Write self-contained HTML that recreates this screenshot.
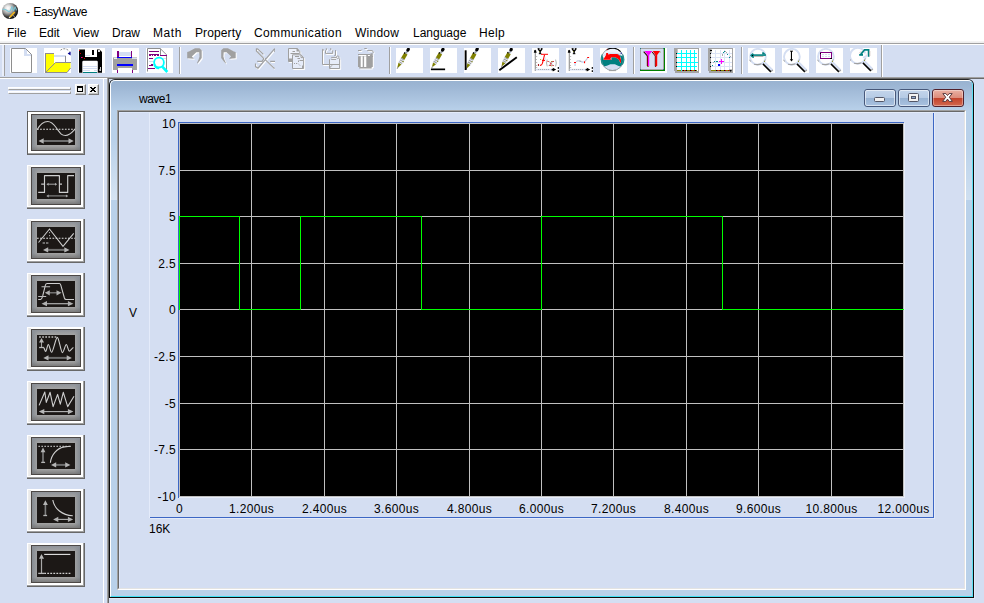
<!DOCTYPE html>
<html>
<head>
<meta charset="utf-8">
<title>EasyWave</title>
<style>
html,body{margin:0;padding:0;}
body{width:984px;height:603px;overflow:hidden;background:#d4def2;position:relative;
 font-family:"Liberation Sans",sans-serif;font-size:12px;color:#000;}
.a{position:absolute;}
.t{position:absolute;white-space:nowrap;line-height:14px;height:14px;font-size:12px;color:#000;}
.tc{text-align:center;}
.tr{text-align:right;}
svg{position:absolute;overflow:hidden;}
/* title + menu */
#top{left:0;top:0;width:984px;height:41px;background:#fff;}
.m{top:26px;}
/* toolbar */
.wb{position:absolute;top:48px;width:27px;height:25px;background:#fff;}
.sep{position:absolute;top:47px;width:1px;height:27px;background:#a0a0a0;}
.sep:after{content:"";position:absolute;left:1px;top:0;width:1px;height:27px;background:#fff;}
/* side buttons */
.pb{position:absolute;top:84px;width:11px;height:11px;box-sizing:border-box;background:#f1f1f1;border:1px solid;border-color:#fff #7c7c7c #7c7c7c #fff;box-shadow:inset -1px -1px 0 #c4c4c4;}

.sb{position:absolute;left:27px;width:58px;height:44px;box-sizing:border-box;background:#fff;
 border-style:solid;border-width:0 2px 2px 0;border-color:#686868;}
.sb:before{content:"";position:absolute;left:0;top:0;width:57px;height:43px;box-sizing:border-box;border-right:1px solid #a0a0a0;border-bottom:1px solid #a0a0a0;}
.sb:after{content:"";position:absolute;left:1px;top:1px;width:3px;height:40px;background:linear-gradient(90deg,#f0f0f0,#e4e4e4);}
.sb .in{position:absolute;left:4px;top:2px;width:50px;height:38px;box-sizing:border-box;border:1px solid #4c4846;
 background:linear-gradient(90deg,#858b92 0,#a4a4a4 6px,#a4a4a4 42px,#858b92 48px);}
.sb .in:after{content:"";position:absolute;left:0;top:0;width:48px;height:36px;background:linear-gradient(rgba(140,145,152,.9) 0,rgba(164,164,164,0) 5px,rgba(150,150,150,0) 31px,rgba(110,110,110,.75) 36px);}
.sb .bl{position:absolute;left:10px;top:8px;width:38px;height:26px;background:#1c1816;}
.sb.f{border:1px solid #606060;border-width:1px 2px 2px 1px;border-color:#606060 #686868 #686868 #606060;}
.sb.f:before{left:0;top:0;width:56px;height:42px;}
.sb.f:after{left:0;top:0;width:3px;height:40px;background:#fff;}
.sb.f .in{left:3px;top:2px;height:37px;}
.sb.f .in:after{height:35px;}
.sb.f .bl{left:9px;top:7px;}
.wbtn{top:89px;width:32px;height:18px;box-sizing:border-box;border:1px solid #47587a;border-radius:3px;
 background:linear-gradient(#c3d5eb 0%,#b6cbe5 47%,#98b3d3 50%,#a9c2e0 100%);}
.wbtn .hi{position:absolute;left:0;top:0;width:28px;height:14px;border:1px solid rgba(255,255,255,.55);border-radius:2px;}
.wbtn.cl{border-color:#51202b;background:linear-gradient(#eab1a4 0%,#dd8d7c 47%,#c2412a 50%,#d2684f 100%);}
.wbtn.cl .hi{border-color:rgba(255,255,255,.35);}
</style>
</head>
<body>
<!-- title & menu -->
<div id="top" class="a"></div>
<div class="a" style="left:0;top:41px;width:984px;height:2px;background:linear-gradient(#f6f6f6,#ececec);"></div>
<div class="a" style="left:0;top:43px;width:984px;height:1px;background:#a0a0a0;"></div>
<div class="a" style="left:0;top:44px;width:984px;height:1px;background:#fff;"></div>
<svg style="left:0;top:0" width="24" height="22" viewBox="0 0 24 22">
<defs><radialGradient id="sg" cx="0.38" cy="0.34" r="0.75" fx="0.36" fy="0.32">
<stop offset="0" stop-color="#ffffff"/><stop offset="0.2" stop-color="#e6e6e6"/><stop offset="0.46" stop-color="#9c9c9c"/><stop offset="0.68" stop-color="#444444"/><stop offset="0.9" stop-color="#080808"/><stop offset="1" stop-color="#000"/></radialGradient></defs>
<circle cx="10.1" cy="11" r="8.05" fill="url(#sg)"/>
<path d="M2.6 9.6 Q4.6 8.6 6.6 10.2 Q8.8 12.4 10.4 10.6 L11.9 6.6 L13.5 10.9 L15.1 6.9 L16.6 10.4" fill="none" stroke="#78c6d6" stroke-width="1.1" stroke-linejoin="round" opacity="0.95"/>
<path d="M14.7 12 L9.9 17.1" stroke="#f2b61c" stroke-width="1.7" fill="none"/>
<path d="M9.9 17.1 L9.1 18" stroke="#f0f0f0" stroke-width="1.3" fill="none"/>
<path d="M13 15.2 L15.6 18" stroke="#d8d8d8" stroke-width="0.9" fill="none" opacity="0.8"/>
</svg>
<div class="t" style="left:26px;top:5px;">- <span style="letter-spacing:-0.4px">EasyWave</span></div>
<div class="t m" style="left:7px;">File</div>
<div class="t m" style="left:39px;">Edit</div>
<div class="t m" style="left:73px;">View</div>
<div class="t m" style="left:112px;">Draw</div>
<div class="t m" style="left:153px;letter-spacing:0.6px">Math</div>
<div class="t m" style="left:195px;letter-spacing:0.12px">Property</div>
<div class="t m" style="left:254px;letter-spacing:0.35px">Communication</div>
<div class="t m" style="left:355px;letter-spacing:0.25px">Window</div>
<div class="t m" style="left:413px;">Language</div>
<div class="t m" style="left:479px;letter-spacing:0.3px">Help</div>

<!-- toolbar bottom lines -->
<div class="a" style="left:0;top:77px;width:984px;height:1px;background:#a0a0a0;"></div>
<div class="a" style="left:0;top:78px;width:107px;height:1px;background:#fff;"></div>
<!-- toolbar gripper -->
<div class="a" style="left:2px;top:45px;width:2px;height:31px;background:#e9eefa;"></div>
<div class="a" style="left:4px;top:45px;width:1px;height:31px;background:#a0a0a0;"></div>
<!-- toolbar end -->
<div class="a" style="left:881px;top:45px;width:1px;height:32px;background:#a0a0a0;"></div>
<div class="a" style="left:882px;top:45px;width:1px;height:32px;background:#fff;"></div>

<!--TB-START-->
<svg style="left:10px;top:48px" width="27" height="25" viewBox="10 48 27 25"><rect x="10" y="48" width="27" height="25" fill="#fff"/><g shape-rendering="crispEdges"><rect x="24" y="49" width="3" height="7" fill="#d4def2"/><rect x="24" y="54" width="8" height="2" fill="#d4def2"/></g><path d="M11.5 48.5 H25.5 L31.5 54.5 V72.5 H11.5 Z" fill="none" stroke="#8e8e8e" stroke-width="1"/></svg>
<svg style="left:44px;top:48px" width="27" height="25" viewBox="44 48 27 25"><rect x="44" y="48" width="27" height="25" fill="#fff"/><g shape-rendering="crispEdges"><rect x="45" y="53" width="9" height="20" fill="#ffff00"/><rect x="54" y="55" width="12" height="2" fill="#d4def2"/><rect x="45" y="53" width="9" height="1" fill="#8e8e8e"/><rect x="45" y="53" width="1" height="20" fill="#8e8e8e"/><rect x="65" y="56" width="1" height="7" fill="#8e8e8e"/></g><path d="M55.5 62.5 H70.5 V68 L67 72.5 H45.5 Z" fill="#ffff00"/><path d="M55.5 62.5 H71 M55.5 62.5 L45.8 72.3 M45.5 72.5 H67 L70.6 68" fill="none" stroke="#8e8e8e" stroke-width="1"/><path d="M60.5 50.2 C62.5 48.2 66.5 47.8 69.5 51.5" fill="none" stroke="#8e8e8e" stroke-width="1" stroke-dasharray="2 1.2"/><path d="M70.6 51.6 V55.4 L67.6 53.4 Z" fill="#000090"/></svg>
<svg style="left:78px;top:48px" width="27" height="25" viewBox="78 48 27 25"><rect x="78" y="48" width="27" height="25" fill="#fff"/><path d="M79 49.5 H99.5 L102 52 V72.7 H79 Z" fill="#000"/><g shape-rendering="crispEdges"><rect x="85" y="48" width="12" height="9" fill="#fff"/><rect x="85" y="55" width="5" height="1" fill="#d4def2"/><rect x="92" y="50" width="2" height="5" fill="#000"/></g><path d="M82.3 72.7 V62 Q82.3 60.8 83.5 60.8 H96.6 Q97.8 60.8 97.8 62 V72.7 Z" fill="#fff"/><g shape-rendering="crispEdges"><rect x="83" y="66" width="14" height="1" fill="#d4def2"/><rect x="83" y="68" width="14" height="1" fill="#d4def2"/><rect x="83" y="70" width="7" height="1" fill="#d4def2"/><rect x="91" y="70" width="3" height="1" fill="#fff"/><rect x="94" y="70" width="3" height="1" fill="#d4def2"/><rect x="83" y="72" width="14" height="1" fill="#008080"/><rect x="100" y="67" width="1" height="4" fill="#c8c8c8"/><rect x="99" y="69" width="1" height="2" fill="#777"/><rect x="98" y="50" width="2" height="2" fill="#ddd"/><rect x="79" y="50" width="1" height="1" fill="#d00000"/><rect x="80" y="53" width="1" height="1" fill="#d00000"/><rect x="81" y="57" width="1" height="1" fill="#c000c0"/><rect x="82" y="57" width="1" height="1" fill="#d00000"/><rect x="84" y="58" width="1" height="1" fill="#d00000"/></g></svg>
<svg style="left:112px;top:48px" width="27" height="25" viewBox="112 48 27 25"><rect x="112" y="48" width="27" height="25" fill="#fff"/><g shape-rendering="crispEdges"><rect x="119" y="52" width="12" height="4" fill="#d4def2"/><rect x="113" y="57" width="24" height="13" fill="#a0a0a0"/><rect x="118" y="68" width="14" height="2" fill="#fff"/><rect x="113" y="57" width="4" height="1" fill="#c8c8c8"/><rect x="114" y="58" width="3" height="1" fill="#f0f0f0"/><rect x="132" y="57" width="5" height="1" fill="#c8c8c8"/><rect x="132" y="58" width="5" height="1" fill="#d4def2"/><rect x="117" y="57" width="15" height="1" fill="#0000ff"/><rect x="117" y="64" width="16" height="2" fill="#0000ff"/><rect x="117" y="51" width="2" height="6" fill="#800080"/><rect x="131" y="51" width="1" height="6" fill="#800080"/><rect x="117" y="70" width="1" height="3" fill="#800080"/><rect x="132" y="70" width="1" height="3" fill="#800080"/></g></svg>
<svg style="left:146px;top:48px" width="27" height="25" viewBox="146 48 27 25"><rect x="146" y="48" width="27" height="25" fill="#fff"/><path d="M147.5 71.5 V48.5 H160.5 V55 M160.5 48.8 L166.5 54.8 V70.5" fill="none" stroke="#8e8e8e" stroke-width="1"/><g shape-rendering="crispEdges"><rect x="149" y="51" width="10" height="1" fill="#800080"/><rect x="149" y="54" width="10" height="1" fill="#800080"/><rect x="149" y="55" width="2" height="1" fill="#800080"/><rect x="152" y="55" width="1" height="1" fill="#800080"/><rect x="154" y="55" width="2" height="1" fill="#800080"/><rect x="157" y="55" width="2" height="1" fill="#800080"/><rect x="160" y="55" width="7" height="1" fill="#800080"/><rect x="149" y="58" width="4" height="1" fill="#800080"/><rect x="149" y="61" width="5" height="1" fill="#d4def2"/><rect x="149" y="65" width="4" height="1" fill="#800080"/><rect x="151" y="64" width="2" height="1" fill="#800080"/><rect x="148" y="68" width="7" height="1" fill="#800080"/><rect x="161" y="58" width="5" height="1" fill="#d4def2"/></g><circle cx="159" cy="62.6" r="4.9" fill="#fff" stroke="#00ffff" stroke-width="1.8"/><path d="M154.3 64 Q155 68.3 159 68.3 " fill="none" stroke="#00ffff" stroke-width="2"/><path d="M162.5 66.8 L167.3 72" fill="none" stroke="#00ffff" stroke-width="2.6"/></svg>
<svg style="left:180px;top:48px" width="27" height="25" viewBox="180 48 27 25"><g transform="translate(1,1)"><path d="M187.2 52 L189 51.5 L195 48.2 H199.5 L201.7 50.2 V58 L199.5 61 L197.3 63.6 L197 63 L198.6 59.5 L199.5 56.5 L199.2 52.3 H196.3 L191.8 56.6 L194 58.8 L187.2 58.3 Z" fill="#ffffff"/></g><path d="M187.2 52 L189 51.5 L195 48.2 H199.5 L201.7 50.2 V58 L199.5 61 L197.3 63.6 L197 63 L198.6 59.5 L199.5 56.5 L199.2 52.3 H196.3 L191.8 56.6 L194 58.8 L187.2 58.3 Z" fill="#a0a0a0"/></svg>
<svg style="left:214px;top:48px" width="27" height="25" viewBox="214 48 27 25"><g transform="translate(1,1)"><g transform="translate(422.9,0) scale(-1,1)"><path d="M187.2 52 L189 51.5 L195 48.2 H199.5 L201.7 50.2 V58 L199.5 61 L197.3 63.6 L197 63 L198.6 59.5 L199.5 56.5 L199.2 52.3 H196.3 L191.8 56.6 L194 58.8 L187.2 58.3 Z" fill="#fff"/></g></g><g transform="translate(422.9,0) scale(-1,1)"><path d="M187.2 52 L189 51.5 L195 48.2 H199.5 L201.7 50.2 V58 L199.5 61 L197.3 63.6 L197 63 L198.6 59.5 L199.5 56.5 L199.2 52.3 H196.3 L191.8 56.6 L194 58.8 L187.2 58.3 Z" fill="#a0a0a0"/></g></svg>
<svg style="left:248px;top:48px" width="27" height="25" viewBox="248 48 27 25"><g transform="translate(1,1)"><path d="M256.4 48.6 V51 L263.2 57.8 Q264.2 59 262.6 60.4 L262 61.3 H257.2 M256.4 48.6 L258 49.2 L263.4 54.4 M274.7 48.5 L258 68.2 L255.5 66.6 V63.4 M274.8 48.6 V52 M266 58 Q264.8 59.5 266.2 60.6 L274.2 68.3 M270.2 61.3 H275 " fill="none" stroke="#ffffff" stroke-width="1.15"/><path d="M275 61.3 Q277.3 63 276.9 65.5 Q276.5 67.8 274.2 68.3" fill="none" stroke="#ffffff" stroke-width="1" stroke-dasharray="1.6 1"/></g><path d="M256.4 48.6 V51 L263.2 57.8 Q264.2 59 262.6 60.4 L262 61.3 H257.2 M256.4 48.6 L258 49.2 L263.4 54.4 M274.7 48.5 L258 68.2 L255.5 66.6 V63.4 M274.8 48.6 V52 M266 58 Q264.8 59.5 266.2 60.6 L274.2 68.3 M270.2 61.3 H275 " fill="none" stroke="#a0a0a0" stroke-width="1.15"/><path d="M275 61.3 Q277.3 63 276.9 65.5 Q276.5 67.8 274.2 68.3" fill="none" stroke="#a0a0a0" stroke-width="1" stroke-dasharray="1.6 1"/></svg>
<svg style="left:282px;top:48px" width="27" height="25" viewBox="282 48 27 25"><g transform="translate(1,1)"><path d="M292 61.5 H288.5 V48.5 H297.4 L299.8 51.6 V54" fill="none" stroke="#ffffff" stroke-width="1"/><path d="M288.5 58.4 H292 V61.6 H288.5 Z M296.5 48.5 H297.5 L299.8 51.6 H296.5 Z" fill="#ffffff"/><path d="M290.5 53.5 H299 M292.5 51.5 H295" fill="none" stroke="#ffffff" stroke-width="1"/><path d="M292.5 54.8 H301 L303.6 57.6 V68.5 H292.5 Z" fill="none" stroke="#ffffff" stroke-width="1"/><path d="M295 56.5 H299 M297.5 58.5 H300 M299.5 60.5 H303 M298.5 60.5 V62 M301 54.8 V57.6 H303.6" fill="none" stroke="#ffffff" stroke-width="1"/><path d="M294 63.5 H298" fill="none" stroke="#ffffff" stroke-width="1" stroke-dasharray="1 1"/><path d="M298 63.5 L300.5 66" fill="none" stroke="#ffffff" stroke-width="1" stroke-dasharray="1 0.6"/><path d="M302 65.5 H303.6 V68.5 H302 Z" fill="#ffffff"/></g><path d="M289 49 H297 L299.5 52 V55 H293 V61 H289 Z" fill="#eef2fb"/><path d="M293 55.3 H301 L303.3 57.8 V68 H293 Z" fill="#e6ecf9"/><path d="M292 61.5 H288.5 V48.5 H297.4 L299.8 51.6 V54" fill="none" stroke="#a0a0a0" stroke-width="1"/><path d="M288.5 58.4 H292 V61.6 H288.5 Z M296.5 48.5 H297.5 L299.8 51.6 H296.5 Z" fill="#a0a0a0"/><path d="M290.5 53.5 H299 M292.5 51.5 H295" fill="none" stroke="#a0a0a0" stroke-width="1"/><path d="M292.5 54.8 H301 L303.6 57.6 V68.5 H292.5 Z" fill="none" stroke="#a0a0a0" stroke-width="1"/><path d="M295 56.5 H299 M297.5 58.5 H300 M299.5 60.5 H303 M298.5 60.5 V62 M301 54.8 V57.6 H303.6" fill="none" stroke="#a0a0a0" stroke-width="1"/><path d="M294 63.5 H298" fill="none" stroke="#a0a0a0" stroke-width="1" stroke-dasharray="1 1"/><path d="M298 63.5 L300.5 66" fill="none" stroke="#a0a0a0" stroke-width="1" stroke-dasharray="1 0.6"/><path d="M302 65.5 H303.6 V68.5 H302 Z" fill="#a0a0a0"/></svg>
<svg style="left:316px;top:48px" width="27" height="25" viewBox="316 48 27 25"><g transform="translate(1,1)"><path d="M322.5 49.3 V64.5 H329.4 M335.5 50.1 V55.5 H334.3" fill="none" stroke="#ffffff" stroke-width="1"/><path d="M325.5 50.4 V53.4 H332.7 V50.4 M325.5 50.4 L326.8 49 L326 48.2 M330 50.4 L331.2 49 L330.4 48.2 M322.5 49.3 L324 50.3" fill="none" stroke="#ffffff" stroke-width="1"/><path d="M329.5 59.3 V68.5 H339.6 V58.4 M329.5 64.5 H339.6 M331.2 57.4 H336 M331.2 59.4 H336 M329.5 68 L332 65.3" fill="none" stroke="#ffffff" stroke-width="1"/><circle cx="337.7" cy="57.2" r="1.3" fill="none" stroke="#ffffff" stroke-width="0.9"/></g><path d="M330 60 H339 V68 H330 Z" fill="#e6ecf9"/><path d="M322.5 49.3 V64.5 H329.4 M335.5 50.1 V55.5 H334.3" fill="none" stroke="#a0a0a0" stroke-width="1"/><path d="M325.5 50.4 V53.4 H332.7 V50.4 M325.5 50.4 L326.8 49 L326 48.2 M330 50.4 L331.2 49 L330.4 48.2 M322.5 49.3 L324 50.3" fill="none" stroke="#a0a0a0" stroke-width="1"/><path d="M329.5 59.3 V68.5 H339.6 V58.4 M329.5 64.5 H339.6 M331.2 57.4 H336 M331.2 59.4 H336 M329.5 68 L332 65.3" fill="none" stroke="#a0a0a0" stroke-width="1"/><circle cx="337.7" cy="57.2" r="1.3" fill="none" stroke="#a0a0a0" stroke-width="0.9"/></svg>
<svg style="left:350px;top:48px" width="27" height="25" viewBox="350 48 27 25"><g transform="translate(1,1)"><path d="M358 54.5 H370.4 M358 50.5 H361 L361.8 49.6 M364.3 48.5 H366.8 M367.2 50.6 H372 Q373.4 50.8 373.2 53" fill="none" stroke="#ffffff" stroke-width="1"/><path d="M358 56.2 H372.8 V53.3 H370.5 V54.5 H366.3 V56.2 M358 56.2 V66.9 H359.2 V68.5 H371.7 V66.9 H372.8 V56 Z" fill="#ffffff"/></g><path d="M358 54.5 H370.4 M358 50.5 H361 L361.8 49.6 M364.3 48.5 H366.8 M367.2 50.6 H372 Q373.4 50.8 373.2 53" fill="none" stroke="#a0a0a0" stroke-width="1"/><path d="M358 56.2 H372.8 V53.3 H370.5 V54.5 H366.3 V56.2 M358 56.2 V66.9 H359.2 V68.5 H371.7 V66.9 H372.8 V56 Z" fill="#a0a0a0"/><path d="M360.7 56.2 H362.7 V66.9 H360.7 Z M364.1 56.2 H366.3 V66.9 H364.1 Z" fill="#fff"/><rect x="367.9" y="55" width="2" height="1" fill="#fff"/></svg>
<svg style="left:396px;top:48px" width="27" height="25" viewBox="396 48 27 25"><rect x="396" y="48" width="27" height="25" fill="#fff"/><g transform="translate(408.1,49.7) rotate(120.24) scale(1.002,1)"><rect x="1.4" y="-1.5" width="3.4" height="3" fill="#d4def2"/><rect x="2" y="-0.6" width="2.6" height="1.1" fill="#9a9a9a"/><rect x="10" y="-2.2" width="6.6" height="4.4" fill="#dfe6f5"/><rect x="4.5" y="-1.9" width="6" height="3.8" fill="#808000"/><rect x="3.9" y="0.6" width="1.4" height="1.3" fill="#000"/><rect x="10.30" y="-1.7" width="1.3" height="3.4" fill="#a0a0a0"/><rect x="11.60" y="-1.7" width="0.7" height="3.4" fill="#eef1f8"/><rect x="12.30" y="-1.7" width="1.3" height="3.4" fill="#a0a0a0"/><rect x="13.60" y="-1.7" width="0.7" height="3.4" fill="#ffffff"/><rect x="14.30" y="-1.7" width="1.3" height="3.4" fill="#a0a0a0"/><rect x="15.60" y="-1.7" width="0.6" height="3.4" fill="#eef1f8"/><rect x="12.2" y="-2.2" width="1.2" height="1.1" fill="#808000"/><path d="M16.2 -1.7 L20.2 -0.4 L20.2 0.5 L16.2 1.7 Z" fill="#808000"/><rect x="20" y="-0.45" width="1.9" height="0.9" fill="#8c8c8c"/><ellipse cx="0" cy="0" rx="2.1" ry="1.6" fill="#000"/></g></svg>
<svg style="left:430px;top:48px" width="27" height="25" viewBox="430 48 27 25"><rect x="430" y="48" width="27" height="25" fill="#fff"/><g transform="translate(442.8,49.7) rotate(121.29) scale(0.981,1)"><rect x="1.4" y="-1.5" width="3.4" height="3" fill="#d4def2"/><rect x="2" y="-0.6" width="2.6" height="1.1" fill="#9a9a9a"/><rect x="10" y="-2.2" width="6.6" height="4.4" fill="#dfe6f5"/><rect x="4.5" y="-1.9" width="6" height="3.8" fill="#808000"/><rect x="3.9" y="0.6" width="1.4" height="1.3" fill="#000"/><rect x="10.30" y="-1.7" width="1.3" height="3.4" fill="#a0a0a0"/><rect x="11.60" y="-1.7" width="0.7" height="3.4" fill="#eef1f8"/><rect x="12.30" y="-1.7" width="1.3" height="3.4" fill="#a0a0a0"/><rect x="13.60" y="-1.7" width="0.7" height="3.4" fill="#ffffff"/><rect x="14.30" y="-1.7" width="1.3" height="3.4" fill="#a0a0a0"/><rect x="15.60" y="-1.7" width="0.6" height="3.4" fill="#eef1f8"/><rect x="12.2" y="-2.2" width="1.2" height="1.1" fill="#808000"/><path d="M16.2 -1.7 L20.2 -0.4 L20.2 0.5 L16.2 1.7 Z" fill="#808000"/><rect x="20" y="-0.45" width="1.9" height="0.9" fill="#8c8c8c"/><ellipse cx="0" cy="0" rx="2.1" ry="1.6" fill="#000"/></g><rect x="430.9" y="68.5" width="14.2" height="1.7" fill="#000"/></svg>
<svg style="left:464px;top:48px" width="27" height="25" viewBox="464 48 27 25"><rect x="464" y="48" width="27" height="25" fill="#fff"/><g transform="translate(477,49.4) rotate(118.86) scale(1.036,1)"><rect x="1.4" y="-1.5" width="3.4" height="3" fill="#d4def2"/><rect x="2" y="-0.6" width="2.6" height="1.1" fill="#9a9a9a"/><rect x="10" y="-2.2" width="6.6" height="4.4" fill="#dfe6f5"/><rect x="4.5" y="-1.9" width="6" height="3.8" fill="#808000"/><rect x="3.9" y="0.6" width="1.4" height="1.3" fill="#000"/><rect x="10.30" y="-1.7" width="1.3" height="3.4" fill="#a0a0a0"/><rect x="11.60" y="-1.7" width="0.7" height="3.4" fill="#eef1f8"/><rect x="12.30" y="-1.7" width="1.3" height="3.4" fill="#a0a0a0"/><rect x="13.60" y="-1.7" width="0.7" height="3.4" fill="#ffffff"/><rect x="14.30" y="-1.7" width="1.3" height="3.4" fill="#a0a0a0"/><rect x="15.60" y="-1.7" width="0.6" height="3.4" fill="#eef1f8"/><rect x="12.2" y="-2.2" width="1.2" height="1.1" fill="#808000"/><path d="M16.2 -1.7 L20.2 -0.4 L20.2 0.5 L16.2 1.7 Z" fill="#808000"/><rect x="20" y="-0.45" width="1.9" height="0.9" fill="#8c8c8c"/><ellipse cx="0" cy="0" rx="2.1" ry="1.6" fill="#000"/></g><rect x="464.7" y="50.3" width="1.9" height="19.7" fill="#000"/></svg>
<svg style="left:498px;top:48px" width="27" height="25" viewBox="498 48 27 25"><rect x="498" y="48" width="27" height="25" fill="#fff"/><path d="M499.3 70.3 L516.8 57.2" stroke="#000" stroke-width="1.9" fill="none"/><g transform="translate(511.1,49.7) rotate(119.31) scale(0.908,1)"><rect x="1.4" y="-1.5" width="3.4" height="3" fill="#d4def2"/><rect x="2" y="-0.6" width="2.6" height="1.1" fill="#9a9a9a"/><rect x="10" y="-2.2" width="6.6" height="4.4" fill="#dfe6f5"/><rect x="4.5" y="-1.9" width="6" height="3.8" fill="#808000"/><rect x="3.9" y="0.6" width="1.4" height="1.3" fill="#000"/><rect x="10.30" y="-1.7" width="1.3" height="3.4" fill="#a0a0a0"/><rect x="11.60" y="-1.7" width="0.7" height="3.4" fill="#eef1f8"/><rect x="12.30" y="-1.7" width="1.3" height="3.4" fill="#a0a0a0"/><rect x="13.60" y="-1.7" width="0.7" height="3.4" fill="#ffffff"/><rect x="14.30" y="-1.7" width="1.3" height="3.4" fill="#a0a0a0"/><rect x="15.60" y="-1.7" width="0.6" height="3.4" fill="#eef1f8"/><rect x="12.2" y="-2.2" width="1.2" height="1.1" fill="#808000"/><path d="M16.2 -1.7 L20.2 -0.4 L20.2 0.5 L16.2 1.7 Z" fill="#808000"/><rect x="20" y="-0.45" width="1.9" height="0.9" fill="#8c8c8c"/><ellipse cx="0" cy="0" rx="2.1" ry="1.6" fill="#000"/></g></svg>
<svg style="left:532px;top:48px" width="27" height="25" viewBox="532 48 27 25"><rect x="532" y="48" width="27" height="25" fill="#fff"/><g transform="translate(0,0)"><rect x="534.7" y="52" width="1.3" height="19" fill="#a0a0a0"/><rect x="535.6" y="68.8" width="17" height="1.6" fill="#d4def2"/><path d="M536 56.5 H537.2 M536 59.5 H537 M536 62.5 H537.2 M536 65.5 H537 M536 67.5 H537.2" stroke="#a8a8a8" stroke-width="0.8" fill="none"/><path d="M538 69.5 H549.5" stroke="#a8a8a8" stroke-width="1.2" stroke-dasharray="0.9 1.1" fill="none"/><path d="M533.8 52.7 L534.3 50.4 Q535.2 49.2 536 50.4 L536.7 52.7 Z" fill="#000"/><path d="M552.8 67.8 L556.2 69.6 L552.8 71.5 Z" fill="#000"/><rect x="551.6" y="68.9" width="2.4" height="1.5" fill="#000"/><rect x="557.7" y="67.1" width="1.3" height="1.7" fill="#000"/><rect x="557.7" y="70.3" width="1.3" height="1.6" fill="#000"/><path d="M538.2 48.9 L540.1 51.5 L542 48.9 M540.1 51.3 V54" stroke="#000" stroke-width="1.4" fill="none"/><rect x="537.6" y="48.2" width="2" height="0.9" fill="#000"/><rect x="540.8" y="48.2" width="1.8" height="0.9" fill="#000"/><rect x="538.8" y="53.3" width="2.6" height="0.9" fill="#000"/><rect x="539.2" y="51" width="0.8" height="0.8" fill="#808000"/></g><path d="M541 54.3 H548" stroke="#ff0000" stroke-width="1" fill="none"/><path d="M544.5 54.8 L543.3 60 L542.4 63.4 Q541.6 65.6 540 65.4" stroke="#ff0000" stroke-width="1.1" fill="none"/><path d="M542 60.4 H545" stroke="#ff0000" stroke-width="1.1" fill="none"/><ellipse cx="538.5" cy="65" rx="0.7" ry="1" fill="#a00000"/><path d="M547.2 59.6 Q545.8 63 547.2 66.4 M555.6 59.6 Q557 63 555.6 66.4" stroke="#b0b0b0" stroke-width="1" fill="none"/><path d="M548.6 61.2 Q551 63.2 553.4 66 M553.4 61.2 Q551 63.2 548.6 66" stroke="#c4c8d4" stroke-width="1.1" fill="none"/><rect x="547.6" y="61" width="1" height="1" fill="#d00"/><rect x="552.4" y="61" width="1.3" height="1" fill="#c00"/><rect x="550.4" y="62.6" width="1" height="2" fill="#d00"/><rect x="549.4" y="65" width="1.4" height="1" fill="#c00"/><rect x="552.6" y="65" width="1" height="1" fill="#c00"/><rect x="551" y="61" width="0.9" height="0.9" fill="#808000"/><rect x="551.2" y="65.4" width="0.9" height="0.9" fill="#808000"/><rect x="540.2" y="59" width="0.9" height="0.9" fill="#a0a000"/><rect x="544.6" y="57.5" width="1" height="2.5" fill="#d4def2"/></svg>
<svg style="left:566px;top:48px" width="27" height="25" viewBox="566 48 27 25"><rect x="566" y="48" width="27" height="25" fill="#fff"/><g transform="translate(34,0)"><rect x="534.7" y="52" width="1.3" height="19" fill="#a0a0a0"/><rect x="535.6" y="68.8" width="17" height="1.6" fill="#d4def2"/><path d="M536 56.5 H537.2 M536 59.5 H537 M536 62.5 H537.2 M536 65.5 H537 M536 67.5 H537.2" stroke="#a8a8a8" stroke-width="0.8" fill="none"/><path d="M538 69.5 H549.5" stroke="#a8a8a8" stroke-width="1.2" stroke-dasharray="0.9 1.1" fill="none"/><path d="M533.8 52.7 L534.3 50.4 Q535.2 49.2 536 50.4 L536.7 52.7 Z" fill="#000"/><path d="M552.8 67.8 L556.2 69.6 L552.8 71.5 Z" fill="#000"/><rect x="551.6" y="68.9" width="2.4" height="1.5" fill="#000"/><rect x="557.7" y="67.1" width="1.3" height="1.7" fill="#000"/><rect x="557.7" y="70.3" width="1.3" height="1.6" fill="#000"/><path d="M538.2 48.9 L540.1 51.5 L542 48.9 M540.1 51.3 V54" stroke="#000" stroke-width="1.4" fill="none"/><rect x="537.6" y="48.2" width="2" height="0.9" fill="#000"/><rect x="540.8" y="48.2" width="1.8" height="0.9" fill="#000"/><rect x="538.8" y="53.3" width="2.6" height="0.9" fill="#000"/><rect x="539.2" y="51" width="0.8" height="0.8" fill="#808000"/></g><rect x="574.2" y="63" width="1.8" height="3" fill="#d4def2"/><path d="M576 61.7 L578 60.7 L581 61.4 L584 62.2" stroke="#c8d0e4" stroke-width="1.1" fill="none"/><path d="M579.3 61 L581.4 61.5" stroke="#a0a0a0" stroke-width="0.9" fill="none"/><rect x="581.3" y="61.3" width="2.4" height="1.6" fill="#d4def2"/><path d="M585 61.4 L587.6 58.2" stroke="#c0c8dc" stroke-width="1.1" fill="none"/><rect x="574" y="62" width="2" height="1" fill="#ff0000"/><rect x="584" y="61.3" width="1.1" height="1.9" fill="#ff0000"/><rect x="587.2" y="57" width="1.9" height="1" fill="#ff0000"/></svg>
<svg style="left:600px;top:48px" width="27" height="25" viewBox="600 48 27 25"><rect x="600" y="48" width="27" height="25" fill="#fff"/><clipPath id="gc"><circle cx="612.5" cy="59.3" r="11.2"/></clipPath><g clip-path="url(#gc)"><rect x="600" y="47" width="26" height="26" fill="#eef2fa"/><path d="M600 54.5 L603.5 54.5 L603.5 60 H611.4 V57.3 H615.4 L618.9 59.4 L620.1 62.4 L620.9 63.2 L621.3 60 L620 56 L617.4 54 L625 54 V66.8 H600 Z" fill="#008080"/><path d="M602 60 L605 55 Q607 53.6 612.5 53.6 Q619 53.6 622.5 56 L624 60 V47 H600 V58 Z" fill="#eef2fa"/><path d="M603.3 55.5 Q607 53.2 612.5 53.2 Q618.5 53.2 621.8 55.5" fill="none" stroke="#d4def2" stroke-width="1.3"/><path d="M601.2 55 V60 H603 V56.5 Z M623.9 55 V66 H620.9 V63 L621.4 60 L621 57 Z" fill="#008080"/><path d="M603.2 59.8 L606 55 L606.2 53 H608 L608.2 54.5 L610.4 54 H617.4 L619.9 56 L621.1 60 L620.9 63 L620.1 62.4 L618.9 59.4 L615.4 57.2 H611.4 L610.4 58.4 L611.4 59.8 Z" fill="#ff0000"/><path d="M600 73 V66.4 L604.5 66.4 Q607.5 65.4 610.4 64.2 H614.9 Q617.5 65.4 619.9 66.6 L626 66.6 V73 Z" fill="#d4def2"/></g><circle cx="612.5" cy="59.3" r="11.2" fill="none" stroke="#8c9ca0" stroke-width="0.9"/><path d="M602.3 54.6 A11.2 11.2 0 0 0 602.5 64.4" fill="none" stroke="#208c8c" stroke-width="1.1"/><path d="M622.6 54.4 A11.2 11.2 0 0 1 622.4 64.6" fill="none" stroke="#208c8c" stroke-width="1.1"/><path d="M607.2 49.5 A11.2 11.2 0 0 1 620.6 51.6" fill="none" stroke="#000" stroke-width="1.1"/><rect x="606.5" y="49.3" width="1" height="1" fill="#c00000"/><rect x="620.6" y="52.6" width="1.2" height="1.2" fill="#000080"/><path d="M609 70.6 H616" stroke="#989898" stroke-width="0.9" fill="none"/></svg>
<svg style="left:640px;top:48px" width="27" height="25" viewBox="640 48 27 25"><rect x="640" y="48" width="27" height="25" fill="#fff"/><g shape-rendering="crispEdges"><rect x="641" y="49" width="22" height="20" fill="#d4def2"/><rect x="640" y="48" width="25" height="1" fill="#a4a4a4"/><rect x="640" y="48" width="1" height="22" fill="#a4a4a4"/><rect x="663" y="49" width="1" height="21" fill="#a4a4a4"/><rect x="641" y="69" width="23" height="1" fill="#a4a4a4"/><rect x="664" y="48" width="1" height="23" fill="#008000"/><rect x="640" y="70" width="25" height="1" fill="#008000"/><rect x="640" y="48" width="1" height="1" fill="#208088"/><rect x="663" y="48" width="1" height="1" fill="#208088"/><rect x="640" y="69" width="1" height="1" fill="#208088"/><rect x="663" y="69" width="1" height="1" fill="#208088"/></g><path d="M643.7 51.6 L647.6 56.2 V66.4" fill="none" stroke="#300000" stroke-width="1.1"/><path d="M644.5 51 H652.2 L649.2 55 V66.4 H647.7 V55 Z" fill="#ff00ff"/><path d="M647.3 56 V66 " fill="none" stroke="#800000" stroke-width="0.9"/><path d="M652 51.8 L655.3 56 V66.4" fill="none" stroke="#400000" stroke-width="1"/><path d="M652.7 51 H660.1 L657.2 55 V66 L656 66.6 H655.4 V55 Z" fill="#ff0000"/><rect x="647.3" y="66" width="1.4" height="0.9" fill="#808000"/><rect x="655" y="66.2" width="1" height="0.8" fill="#800000"/><rect x="659.6" y="51.6" width="0.9" height="0.9" fill="#808000"/></svg>
<svg style="left:674px;top:48px" width="27" height="25" viewBox="674 48 27 25"><rect x="674" y="48" width="27" height="25" fill="#fff"/><g transform="translate(0,0)" shape-rendering="crispEdges"><rect x="674" y="48" width="25" height="25" fill="#a4a4a4"/><rect x="677" y="49" width="21" height="22" fill="#fff"/><rect x="674" y="71" width="1" height="2" fill="#d4def2"/><rect x="677" y="49" width="1" height="5" fill="#c8c8c8"/><rect x="677" y="70" width="20" height="1" fill="#808000"/></g><g shape-rendering="crispEdges"><rect x="681" y="50" width="1" height="21" fill="#00ffff"/><rect x="686" y="50" width="1" height="21" fill="#00ffff"/><rect x="690" y="50" width="1" height="21" fill="#00ffff"/><rect x="694" y="50" width="1" height="21" fill="#00ffff"/><rect x="677" y="53" width="20" height="1" fill="#00ffff"/><rect x="677" y="57" width="20" height="1" fill="#00ffff"/><rect x="677" y="62" width="21" height="1" fill="#00ffff"/><rect x="677" y="66" width="20" height="1" fill="#00ffff"/><rect x="676" y="53" width="1" height="1" fill="#000"/><rect x="676" y="57" width="1" height="1" fill="#000"/><rect x="676" y="62" width="1" height="1" fill="#000"/><rect x="676" y="66" width="1" height="1" fill="#000"/><rect x="682" y="70" width="1" height="1" fill="#c00000"/><rect x="683" y="70" width="1" height="1" fill="#000"/><rect x="685" y="70" width="1" height="1" fill="#c00000"/><rect x="686" y="70" width="1" height="1" fill="#000"/><rect x="690" y="70" width="1" height="1" fill="#000"/><rect x="691" y="70" width="1" height="1" fill="#c00000"/><rect x="694" y="70" width="1" height="1" fill="#c00000"/><rect x="695" y="70" width="1" height="1" fill="#000"/><rect x="681" y="70" width="1" height="1" fill="#00ffff"/></g></svg>
<svg style="left:708px;top:48px" width="27" height="25" viewBox="708 48 27 25"><rect x="708" y="48" width="27" height="25" fill="#fff"/><g transform="translate(34,0)" shape-rendering="crispEdges"><rect x="674" y="48" width="25" height="25" fill="#a4a4a4"/><rect x="677" y="49" width="21" height="22" fill="#fff"/><rect x="674" y="71" width="1" height="2" fill="#d4def2"/><rect x="677" y="49" width="1" height="5" fill="#c8c8c8"/><rect x="677" y="70" width="20" height="1" fill="#808000"/></g><g shape-rendering="crispEdges"><rect x="715" y="50" width="1" height="20" fill="#dbe3f5"/><rect x="720" y="50" width="1" height="20" fill="#dbe3f5"/><rect x="724" y="50" width="1" height="20" fill="#dbe3f5"/><rect x="729" y="50" width="1" height="20" fill="#dbe3f5"/><rect x="711" y="53" width="21" height="1" fill="#dbe3f5"/><rect x="711" y="57" width="21" height="1" fill="#dbe3f5"/><rect x="711" y="62" width="21" height="1" fill="#dbe3f5"/><rect x="711" y="66" width="21" height="1" fill="#dbe3f5"/><rect x="710" y="50" width="2" height="1" fill="#000"/><rect x="710" y="53" width="1" height="1" fill="#000"/><rect x="710" y="57" width="1" height="1" fill="#000"/><rect x="710" y="62" width="1" height="1" fill="#000"/><rect x="710" y="66" width="1" height="1" fill="#000"/><rect x="716" y="70" width="1" height="1" fill="#000"/><rect x="717" y="70" width="1" height="1" fill="#c00000"/><rect x="719" y="70" width="1" height="1" fill="#c00000"/><rect x="720" y="70" width="1" height="1" fill="#000"/><rect x="724" y="70" width="1" height="1" fill="#000"/><rect x="725" y="70" width="1" height="1" fill="#c00000"/><rect x="728" y="70" width="1" height="1" fill="#c00000"/><rect x="714" y="61" width="1" height="1" fill="#008c8c"/><rect x="716" y="61" width="2" height="1" fill="#008c8c"/><rect x="712" y="65" width="1" height="1" fill="#008c8c"/><rect x="723" y="52" width="1" height="1" fill="#008c8c"/><rect x="724" y="51" width="1" height="1" fill="#008c8c"/><rect x="727" y="54" width="1" height="1" fill="#008c8c"/><rect x="729" y="57" width="1" height="1" fill="#008c8c"/><rect x="722" y="54" width="1" height="2" fill="#a8a8a8"/><rect x="713" y="62" width="1" height="1" fill="#a8a8a8"/><rect x="725" y="51" width="1" height="1" fill="#a8a8a8"/><rect x="726" y="52" width="1" height="1" fill="#a8a8a8"/><rect x="730" y="56" width="1" height="1" fill="#a8a8a8"/><rect x="719" y="61" width="5" height="1" fill="#ff00ff"/><rect x="721" y="59" width="1" height="5" fill="#ff00ff"/><rect x="718" y="64" width="2" height="2" fill="#0000ff"/></g><path d="M729.2 69.8 H732.2 L730.7 72 Z" fill="#000"/></svg>
<svg style="left:748px;top:48px" width="27" height="25" viewBox="748 48 27 25"><rect x="748" y="48" width="27" height="25" fill="#fff"/><g transform="translate(0,0)"><circle cx="757.9" cy="56.8" r="7.9" fill="#fff" stroke="#d4def2" stroke-width="1.9"/><path d="M754 64.2 Q757.8 65.3 761.4 63.8" stroke="#a0a0a0" stroke-width="1.1" fill="none"/><path d="M749.6 59.8 L750.6 61.6" stroke="#a0a0a0" stroke-width="1" fill="none"/><path d="M765.4 59.6 L764.9 60.6" stroke="#a0a0a0" stroke-width="1" fill="none"/><path d="M764.4 62.3 L772.4 70.3" stroke="#d4def2" stroke-width="2.2" fill="none"/><path d="M762.9 63.9 L770.9 71.9" stroke="#000" stroke-width="1.5" fill="none"/><path d="M771 71.4 L772.9 70" stroke="#a0a0a0" stroke-width="1.3" fill="none"/><rect x="764" y="60.8" width="1" height="1" fill="#808000"/></g><path d="M752.5 54.3 H765.9 V55.9 H752.5 Z" fill="#008080"/><path d="M750 55.2 L753.2 52.8 V54.3 H754 V56 L753.8 57.9 L752 57.6 Z" fill="#008080"/><path d="M762.2 52.2 H763.6 L765.9 54.6 H762.2 Z" fill="#008080"/><path d="M753.5 56.5 H763.4" stroke="#a09890" stroke-width="0.7" fill="none"/><rect x="752" y="55" width="1" height="1" fill="#000"/></svg>
<svg style="left:782px;top:48px" width="27" height="25" viewBox="782 48 27 25"><rect x="782" y="48" width="27" height="25" fill="#fff"/><g transform="translate(34,0)"><circle cx="757.9" cy="56.8" r="7.9" fill="#fff" stroke="#d4def2" stroke-width="1.9"/><path d="M754 64.2 Q757.8 65.3 761.4 63.8" stroke="#a0a0a0" stroke-width="1.1" fill="none"/><path d="M749.6 59.8 L750.6 61.6" stroke="#a0a0a0" stroke-width="1" fill="none"/><path d="M765.4 59.6 L764.9 60.6" stroke="#a0a0a0" stroke-width="1" fill="none"/><path d="M764.4 62.3 L772.4 70.3" stroke="#d4def2" stroke-width="2.2" fill="none"/><path d="M762.9 63.9 L770.9 71.9" stroke="#000" stroke-width="1.5" fill="none"/><path d="M771 71.4 L772.9 70" stroke="#a0a0a0" stroke-width="1.3" fill="none"/><rect x="764" y="60.8" width="1" height="1" fill="#808000"/></g><rect x="790.9" y="51" width="1.1" height="9" fill="#000"/><rect x="790" y="50.7" width="3" height="0.9" fill="#000"/><path d="M789.8 59.2 H793.2 L791.5 61.6 Z" fill="#000"/></svg>
<svg style="left:816px;top:48px" width="27" height="25" viewBox="816 48 27 25"><rect x="816" y="48" width="27" height="25" fill="#fff"/><g transform="translate(68,0)"><circle cx="757.9" cy="56.8" r="7.9" fill="#fff" stroke="#d4def2" stroke-width="1.9"/><path d="M754 64.2 Q757.8 65.3 761.4 63.8" stroke="#a0a0a0" stroke-width="1.1" fill="none"/><path d="M749.6 59.8 L750.6 61.6" stroke="#a0a0a0" stroke-width="1" fill="none"/><path d="M765.4 59.6 L764.9 60.6" stroke="#a0a0a0" stroke-width="1" fill="none"/><path d="M764.4 62.3 L772.4 70.3" stroke="#d4def2" stroke-width="2.2" fill="none"/><path d="M762.9 63.9 L770.9 71.9" stroke="#000" stroke-width="1.5" fill="none"/><path d="M771 71.4 L772.9 70" stroke="#a0a0a0" stroke-width="1.3" fill="none"/><rect x="764" y="60.8" width="1" height="1" fill="#808000"/></g><g shape-rendering="crispEdges"><rect x="822" y="54" width="2" height="1" fill="#d4def2"/><rect x="825" y="54" width="2" height="1" fill="#d4def2"/><rect x="828" y="54" width="2" height="1" fill="#d4def2"/><rect x="822" y="56" width="2" height="1" fill="#d4def2"/><rect x="825" y="56" width="2" height="1" fill="#d4def2"/><rect x="828" y="56" width="2" height="1" fill="#d4def2"/></g><rect x="820.5" y="52.5" width="11" height="6" fill="none" stroke="#800080" stroke-width="1"/><rect x="820" y="53" width="1" height="1" fill="#000"/><rect x="830.2" y="58" width="1.8" height="1" fill="#000"/></svg>
<svg style="left:850px;top:48px" width="27" height="25" viewBox="850 48 27 25"><rect x="850" y="48" width="27" height="25" fill="#fff"/><g transform="translate(0,-1)"><g transform="translate(100,0)"><circle cx="757.9" cy="56.8" r="7.9" fill="#fff" stroke="#d4def2" stroke-width="1.9"/><path d="M754 64.2 Q757.8 65.3 761.4 63.8" stroke="#a0a0a0" stroke-width="1.1" fill="none"/><path d="M749.6 59.8 L750.6 61.6" stroke="#a0a0a0" stroke-width="1" fill="none"/><path d="M765.4 59.6 L764.9 60.6" stroke="#a0a0a0" stroke-width="1" fill="none"/><path d="M764.4 62.3 L772.4 70.3" stroke="#d4def2" stroke-width="2.2" fill="none"/><path d="M762.9 63.9 L770.9 71.9" stroke="#000" stroke-width="1.5" fill="none"/><path d="M771 71.4 L772.9 70" stroke="#a0a0a0" stroke-width="1.3" fill="none"/><rect x="764" y="60.8" width="1" height="1" fill="#808000"/></g></g><path d="M868.6 56.8 V49.8 H864.6 L860.8 54.4" stroke="#008080" stroke-width="1.7" fill="none"/><rect x="859.2" y="54" width="3.8" height="1.8" fill="#008080"/><path d="M859.4 53.2 L861.4 51.2 M869.8 51 V56" stroke="#c8b0a8" stroke-width="0.8" fill="none"/><path d="M862.8 56.2 L865.6 52.4 L866.2 57.4 Z" fill="#fff"/><path d="M863 57.6 L867.2 55.4" stroke="#d4def2" stroke-width="1.4" fill="none"/></svg>
<div class="sep" style="left:179px;"></div>
<div class="sep" style="left:389px;"></div>
<div class="sep" style="left:633px;"></div>
<div class="sep" style="left:741px;"></div>
<!--TB-END-->

<!-- left dock panel -->
<div class="a" style="left:103px;top:79px;width:1px;height:524px;background:#fff;"></div>
<!--SIDE-START-->
<div class="a" style="left:8px;top:87px;width:63px;height:3px;background:#f3f6fc;border-top:1px solid #fff;border-left:1px solid #fff;border-bottom:1px solid #a0a0a0;border-right:1px solid #a0a0a0;box-sizing:border-box;"></div>
<div class="a" style="left:8px;top:91px;width:63px;height:3px;background:#f3f6fc;border-top:1px solid #fff;border-left:1px solid #fff;border-bottom:1px solid #a0a0a0;border-right:1px solid #a0a0a0;box-sizing:border-box;"></div>
<div class="pb" style="left:75px;"><svg style="left:1px;top:1px" width="6" height="6" shape-rendering="crispEdges"><path d="M0 0H6V6H0Z M1 2V5H5V2Z" fill="#000" fill-rule="evenodd"/></svg></div>
<div class="pb" style="left:88px;"><svg style="left:1px;top:2px" width="6" height="5" shape-rendering="crispEdges"><path d="M0 0h2v1h-2z M4 0h2v1h-2z M1 1h4v1h-4z M2 2h2v1h-2z M1 3h4v1h-4z M0 4h2v1h-2z M4 4h2v1h-2z" fill="#000"/></svg></div>
<div class="sb f" style="top:111px;"><div class="in"></div><div class="bl"><svg style="left:0;top:0" width="38" height="26" viewBox="0 0 38 26"><path d="M0.3 10.5 C3.5 4.5 6.5 2.4 10.7 2.4 C15.5 2.4 17.5 6.5 20.3 10.3 C23.2 14.2 24.5 16.4 28.4 16.4 C32.5 16.4 35 13.5 37.9 10.2" stroke="#cccccc" stroke-width="1.05" fill="none"/><path d="M0 10.3 H38" stroke="#e0e0e0" stroke-width="1.1" stroke-dasharray="1.7 1.4" fill="none"/><path d="M6.2 22 H32.0" stroke="#6e6e6e" stroke-width="2" fill="none"/><path d="M1.5 22 L6.7 19.3 V24.7 Z M36.7 22 L31.500000000000004 19.3 V24.7 Z" fill="#b4b4b4"/></svg></div></div>
<div class="sb" style="top:165px;"><div class="in"></div><div class="bl"><svg style="left:0;top:0" width="38" height="26" viewBox="0 0 38 26"><path d="M1.2 19.4 H7.5 V2.6 H22.4 V19.4 H30.7 V2.6 H37" stroke="#cfcfcf" stroke-width="1.15" fill="none" stroke-linejoin="round"/><path d="M4.2 11.2 H7.5 M22.4 11.2 H25" stroke="#c8c8c8" stroke-width="1.2" fill="none"/><path d="M11.100000000000001 11.2 H18.5" stroke="#a8a8a8" stroke-width="1" fill="none"/><path d="M9.4 11.2 L11.600000000000001 9.7 V12.7 Z M20.2 11.2 L18.0 9.7 V12.7 Z" fill="#a8a8a8"/><path d="M11.200000000000001 22.9 H29.400000000000002" stroke="#8c8c8c" stroke-width="1.1" fill="none"/><path d="M9.3 22.9 L11.700000000000001 21.4 V24.4 Z M31.3 22.9 L28.900000000000002 21.4 V24.4 Z" fill="#a8a8a8"/></svg></div></div>
<div class="sb" style="top:219px;"><div class="in"></div><div class="bl"><svg style="left:0;top:0" width="38" height="26" viewBox="0 0 38 26"><path d="M1.5 15.5 L12.5 2 L26 19.4 L36.7 6.3" stroke="#cfcfcf" stroke-width="1.05" fill="none"/><path d="M0 11.3 H38" stroke="#e0e0e0" stroke-width="1.1" stroke-dasharray="1.7 1.4" fill="none"/><path d="M12.5 5 V10" stroke="#a0a0a0" stroke-width="1" stroke-dasharray="1.2 1.8" fill="none"/><path d="M5.6 16 H8 M9 16 H11.4" stroke="#8a8a8a" stroke-width="1.6" fill="none"/><path d="M10.7 22.9 H27.8" stroke="#6e6e6e" stroke-width="2" fill="none"/><path d="M6 22.9 L11.2 20.2 V25.599999999999998 Z M32.5 22.9 L27.3 20.2 V25.599999999999998 Z" fill="#b4b4b4"/></svg></div></div>
<div class="sb" style="top:273px;"><div class="in"></div><div class="bl"><svg style="left:0;top:0" width="38" height="26" viewBox="0 0 38 26"><path d="M1.2 18.5 H3.6 C5 18.5 5.2 16.5 5.8 14.5 L8.4 4.2 C8.8 2.8 9.2 2.4 10.2 2.4 H22.4 C23.2 2.4 23.4 3 23.8 4.2 L27.4 17 C27.8 18.3 28 18.5 29 18.5 H37" stroke="#cfcfcf" stroke-width="1.05" fill="none"/><path d="M4.5 5.7 H13.1 M1.2 15.5 H9.2" stroke="#bcbcbc" stroke-width="1.1" fill="none"/><path d="M12.3 11.8 H20.0" stroke="#8a8a8a" stroke-width="1.2" fill="none"/><path d="M7.8 11.8 L12.8 9.200000000000001 V14.4 Z M24.5 11.8 L19.5 9.200000000000001 V14.4 Z" fill="#b0b0b0"/><path d="M9.5 22.7 H31.4" stroke="#b0b0b0" stroke-width="1.2" fill="none"/><path d="M4.5 22.7 L10.0 20.099999999999998 V25.3 Z M36.4 22.7 L30.9 20.099999999999998 V25.3 Z" fill="#b0b0b0"/></svg></div></div>
<div class="sb" style="top:327px;"><div class="in"></div><div class="bl"><svg style="left:0;top:0" width="38" height="26" viewBox="0 0 38 26"><path d="M2.1 2.1 H19.6" stroke="#c0c0c0" stroke-width="1.5" stroke-dasharray="1.7 1.4" fill="none"/><path d="M4.5 7.0 V12.5" stroke="#a0a0a0" stroke-width="1.1" fill="none"/><path d="M4.5 3 L2.0 7.5 H7.0 Z" fill="#b8b8b8"/><path d="M2.1 12.5 H7" stroke="#b8b8b8" stroke-width="1.3" fill="none"/><path d="M6.9 12.8 C7.5 14 8 16.4 8.7 16.4 C9.6 16.4 10.4 9.5 11.3 9.5 C12.4 9.5 13.5 17.3 14.6 17.3 C16 17.3 18.8 2.4 20.3 2.4 C21.9 2.4 24 17.6 25.4 17.6 C26.8 17.6 28.2 9.5 29.3 9.5 C30.4 9.5 31.2 16.1 32.2 16.1 C33.3 16.1 35 13.2 36.4 12.5" stroke="#cfcfcf" stroke-width="1.1" fill="none"/><path d="M11.0 22.9 H30.2" stroke="#6e6e6e" stroke-width="2" fill="none"/><path d="M6.3 22.9 L11.5 20.2 V25.599999999999998 Z M34.9 22.9 L29.7 20.2 V25.599999999999998 Z" fill="#b4b4b4"/></svg></div></div>
<div class="sb" style="top:381px;"><div class="in"></div><div class="bl"><svg style="left:0;top:0" width="38" height="26" viewBox="0 0 38 26"><path d="M2.1 16.4 L7.8 3 L9.3 13.4 L13.1 3.3 L16.1 17.6 L20.6 5.4 L23.3 15.2 L26.3 3.3 L30.7 17.6 L37 7.2" stroke="#cfcfcf" stroke-width="1.1" fill="none" stroke-linejoin="round"/><path d="M6.8 22.6 H31.4" stroke="#b8b8b8" stroke-width="1.1" fill="none"/><path d="M1.8 22.6 L7.3 20.0 V25.200000000000003 Z M36.4 22.6 L30.9 20.0 V25.200000000000003 Z" fill="#b8b8b8"/></svg></div></div>
<div class="sb" style="top:435px;"><div class="in"></div><div class="bl"><svg style="left:0;top:0" width="38" height="26" viewBox="0 0 38 26"><path d="M1.5 3.3 H34" stroke="#d0d0d0" stroke-width="1.2" stroke-dasharray="1.3 1.7" fill="none"/><path d="M6 8.8 V19.4" stroke="#808080" stroke-width="1.6" fill="none"/><path d="M6 4.5 L3.6 9.3 H8.4 Z" fill="#b4b4b4"/><path d="M4.2 19.4 H8.1" stroke="#b4b4b4" stroke-width="1.3" fill="none"/><path d="M13.4 19.7 C14 12 20 5 27.5 3.9 C30 3.5 32 3.3 34 3.3" stroke="#cfcfcf" stroke-width="1.1" fill="none"/><path d="M18.7 21.9 H28.7" stroke="#6e6e6e" stroke-width="2" fill="none"/><path d="M14 21.9 L19.2 19.2 V24.599999999999998 Z M33.4 21.9 L28.2 19.2 V24.599999999999998 Z" fill="#b4b4b4"/></svg></div></div>
<div class="sb" style="top:489px;"><div class="in"></div><div class="bl"><svg style="left:0;top:0" width="38" height="26" viewBox="0 0 38 26"><path d="M8.4 7.6 V18.5" stroke="#808080" stroke-width="1.6" fill="none"/><path d="M8.4 3.3 L6.0 8.1 H10.8 Z" fill="#b4b4b4"/><path d="M6.3 18.5 H10.1" stroke="#b4b4b4" stroke-width="1.3" fill="none"/><path d="M15.8 3 C17.5 12 25 18.2 35.8 18.8" stroke="#cfcfcf" stroke-width="1.15" fill="none"/><path d="M20.8 22.4 H31.400000000000002" stroke="#b0b0b0" stroke-width="1.1" fill="none"/><path d="M16.1 22.4 L21.3 19.799999999999997 V25.0 Z M36.1 22.4 L30.900000000000002 19.799999999999997 V25.0 Z" fill="#b0b0b0"/></svg></div></div>
<div class="sb" style="top:543px;"><div class="in"></div><div class="bl"><svg style="left:0;top:0" width="38" height="26" viewBox="0 0 38 26"><path d="M7.2 3.4 H33.4" stroke="#e4e4e4" stroke-width="1.1" fill="none"/><path d="M4.5 7.3 V22.4" stroke="#a8a8a8" stroke-width="1.2" fill="none"/><path d="M4.5 3 L2.0 7.8 H7.0 Z" fill="#b8b8b8"/><path d="M1.2 22.4 H7.2" stroke="#b8b8b8" stroke-width="1.3" fill="none"/><path d="M7.2 22.4 H33.6" stroke="#d0d0d0" stroke-width="1.3" stroke-dasharray="1.8 1.25" fill="none"/></svg></div></div>
<!--SIDE-END-->

<!-- MDI client sunken edge -->
<div class="a" style="left:107px;top:77px;width:1px;height:526px;background:#a0a0a0;"></div>
<div class="a" style="left:108px;top:78px;width:876px;height:1px;background:#696969;"></div>
<div class="a" style="left:108px;top:78px;width:1px;height:525px;background:#696969;"></div>

<!-- MDI child window -->
<div class="a" style="left:109px;top:79px;width:865px;height:519px;box-sizing:border-box;border:1px solid #0c0c0c;border-top-color:#262626;border-radius:6px 6px 0 0;background:#b9d1ea;overflow:hidden;">
  <div class="a" style="left:0;top:0;width:863px;height:31px;background:linear-gradient(#98b2d0 0%,#9db6d4 20%,#b9d1ea 100%);"></div>
  <div class="a" style="left:0;top:0;width:861px;height:515px;border-radius:5px 5px 0 0;border:1px solid;border-color:#fff #5ce0f4 #3fe0f5 #fff;"></div>
</div>
<div class="t" style="left:139px;top:92px;letter-spacing:-0.5px">wave1</div>

<!-- window buttons -->
<div class="a wbtn" style="left:864px;"><div class="hi"></div>
 <svg style="left:9px;top:7px;" width="11" height="5"><rect x="0.5" y="0.5" width="10" height="4" rx="1" fill="#f2f2f2" stroke="#535666" stroke-width="1"/></svg></div>
<div class="a wbtn" style="left:898px;"><div class="hi"></div>
 <svg style="left:9px;top:3px;" width="11" height="9"><rect x="0.5" y="0.5" width="10" height="8" rx="1" fill="#f2f2f2" stroke="#535666"/><rect x="3.5" y="3.5" width="4" height="2" fill="#8fa9cd" stroke="#535666"/></svg></div>
<div class="a wbtn cl" style="left:932px;"><div class="hi"></div>
 <svg style="left:9px;top:3px;" width="11" height="9"><path d="M0.8 0.6 L3.9 0.6 L5.5 2.5 L7.1 0.6 L10.2 0.6 L7.3 4.2 L10.4 8.4 L7.2 8.4 L5.5 6.1 L3.8 8.4 L0.6 8.4 L3.7 4.2 Z" fill="#fff" stroke="#5a3a3e" stroke-width="1" stroke-linejoin="round"/></svg></div>


<div class="a" style="left:974px;top:85px;width:1px;height:514px;background:#e1e9f8;"></div>
<div class="a" style="left:109px;top:598px;width:866px;height:1px;background:#e1e9f8;"></div>
<div class="a" style="left:111px;top:140px;width:6px;height:60px;background:linear-gradient(rgba(255,255,255,0),rgba(255,255,255,.42));"></div>
<div class="a" style="left:966px;top:140px;width:6px;height:60px;background:linear-gradient(rgba(255,255,255,0),rgba(255,255,255,.32));"></div>
<!-- inner sunken frame -->
<div class="a" style="left:117px;top:110px;width:849px;height:480px;box-sizing:border-box;border:1px solid;border-color:#a0a0a0 #fff #fff #a0a0a0;background:#d4def2;">
  <div class="a" style="left:0;top:0;width:847px;height:478px;box-sizing:border-box;border:1px solid;border-color:#696969 #e3e3e3 #e3e3e3 #696969;"></div>
  <div class="a" style="left:1px;top:1px;width:845px;height:1px;background:#dde7fb;"></div>
  <div class="a" style="left:1px;top:1px;width:1px;height:476px;background:#dde7fb;"></div>
</div>

<!--PLOT-START-->
<!-- plot control borders -->
<div class="a" style="left:149px;top:112px;width:784px;height:1px;background:#e4ebfa;"></div>
<div class="a" style="left:149px;top:112px;width:1px;height:406px;background:#e4ebfa;"></div>
<div class="a" style="left:933px;top:113px;width:1px;height:405px;background:#3c66c4;"></div>
<div class="a" style="left:150px;top:517px;width:784px;height:1px;background:#3c66c4;"></div>
<div class="a" style="left:934px;top:113px;width:1px;height:406px;background:#e4ebfa;"></div>
<div class="a" style="left:150px;top:518px;width:785px;height:1px;background:#e4ebfa;"></div>
<div class="a" style="left:178px;top:122px;width:726px;height:1px;background:#3c66c4;"></div>
<div class="a" style="left:178px;top:122px;width:1px;height:376px;background:#3c66c4;"></div>
<div class="a" style="left:904px;top:123px;width:1px;height:375px;background:#e8eefb;"></div>
<div class="a" style="left:179px;top:497px;width:726px;height:1px;background:#e8eefb;"></div>
<div class="a" style="left:179px;top:123px;width:725px;height:374px;background:#000;"></div>
<svg class="a" style="left:0;top:0;" width="984" height="603" shape-rendering="crispEdges"><rect x="179" y="123" width="1" height="374" fill="#c0c0c0"/><rect x="251" y="123" width="1" height="374" fill="#c0c0c0"/><rect x="324" y="123" width="1" height="374" fill="#c0c0c0"/><rect x="396" y="123" width="1" height="374" fill="#c0c0c0"/><rect x="469" y="123" width="1" height="374" fill="#c0c0c0"/><rect x="541" y="123" width="1" height="374" fill="#c0c0c0"/><rect x="613" y="123" width="1" height="374" fill="#c0c0c0"/><rect x="686" y="123" width="1" height="374" fill="#c0c0c0"/><rect x="758" y="123" width="1" height="374" fill="#c0c0c0"/><rect x="831" y="123" width="1" height="374" fill="#c0c0c0"/><rect x="903" y="123" width="1" height="374" fill="#c0c0c0"/><rect x="179" y="123" width="725" height="1" fill="#c0c0c0"/><rect x="179" y="170" width="725" height="1" fill="#c0c0c0"/><rect x="179" y="216" width="725" height="1" fill="#c0c0c0"/><rect x="179" y="263" width="725" height="1" fill="#c0c0c0"/><rect x="179" y="309" width="725" height="1" fill="#c0c0c0"/><rect x="179" y="356" width="725" height="1" fill="#c0c0c0"/><rect x="179" y="403" width="725" height="1" fill="#c0c0c0"/><rect x="179" y="449" width="725" height="1" fill="#c0c0c0"/><rect x="179" y="496" width="725" height="1" fill="#c0c0c0"/><rect x="179" y="216" width="1" height="94" fill="#00ff00"/><rect x="179" y="216" width="61" height="1" fill="#00ff00"/><rect x="239" y="216" width="1" height="94" fill="#00ff00"/><rect x="239" y="309" width="62" height="1" fill="#00ff00"/><rect x="300" y="216" width="1" height="94" fill="#00ff00"/><rect x="300" y="216" width="122" height="1" fill="#00ff00"/><rect x="421" y="216" width="1" height="94" fill="#00ff00"/><rect x="421" y="309" width="121" height="1" fill="#00ff00"/><rect x="541" y="216" width="1" height="94" fill="#00ff00"/><rect x="541" y="216" width="182" height="1" fill="#00ff00"/><rect x="722" y="216" width="1" height="94" fill="#00ff00"/><rect x="722" y="309" width="182" height="1" fill="#00ff00"/></svg>
<div class="t tr" style="left:119px;width:57px;top:117px;letter-spacing:0.35px;">10</div>
<div class="t tr" style="left:119px;width:57px;top:164px;letter-spacing:0.35px;">7.5</div>
<div class="t tr" style="left:119px;width:57px;top:210px;letter-spacing:0.35px;">5</div>
<div class="t tr" style="left:119px;width:57px;top:257px;letter-spacing:0.35px;">2.5</div>
<div class="t tr" style="left:119px;width:57px;top:303px;letter-spacing:0.35px;">0</div>
<div class="t tr" style="left:119px;width:57px;top:350px;letter-spacing:0.35px;">-2.5</div>
<div class="t tr" style="left:119px;width:57px;top:397px;letter-spacing:0.35px;">-5</div>
<div class="t tr" style="left:119px;width:57px;top:443px;letter-spacing:0.35px;">-7.5</div>
<div class="t tr" style="left:119px;width:57px;top:490px;letter-spacing:0.35px;">-10</div>
<div class="t tc" style="left:139px;width:81px;top:502px;letter-spacing:0.32px;">0</div>
<div class="t tc" style="left:211px;width:81px;top:502px;letter-spacing:0.32px;">1.200us</div>
<div class="t tc" style="left:284px;width:81px;top:502px;letter-spacing:0.32px;">2.400us</div>
<div class="t tc" style="left:356px;width:81px;top:502px;letter-spacing:0.32px;">3.600us</div>
<div class="t tc" style="left:429px;width:81px;top:502px;letter-spacing:0.32px;">4.800us</div>
<div class="t tc" style="left:501px;width:81px;top:502px;letter-spacing:0.32px;">6.000us</div>
<div class="t tc" style="left:573px;width:81px;top:502px;letter-spacing:0.32px;">7.200us</div>
<div class="t tc" style="left:646px;width:81px;top:502px;letter-spacing:0.32px;">8.400us</div>
<div class="t tc" style="left:718px;width:81px;top:502px;letter-spacing:0.32px;">9.600us</div>
<div class="t tc" style="left:791px;width:81px;top:502px;letter-spacing:0.32px;">10.800us</div>
<div class="t tc" style="left:863px;width:81px;top:502px;letter-spacing:0.32px;">12.000us</div>
<div class="t" style="left:129px;top:306px;">V</div>
<div class="t" style="left:149px;top:522px;">16K</div>
<!--PLOT-END-->
</body>
</html>
